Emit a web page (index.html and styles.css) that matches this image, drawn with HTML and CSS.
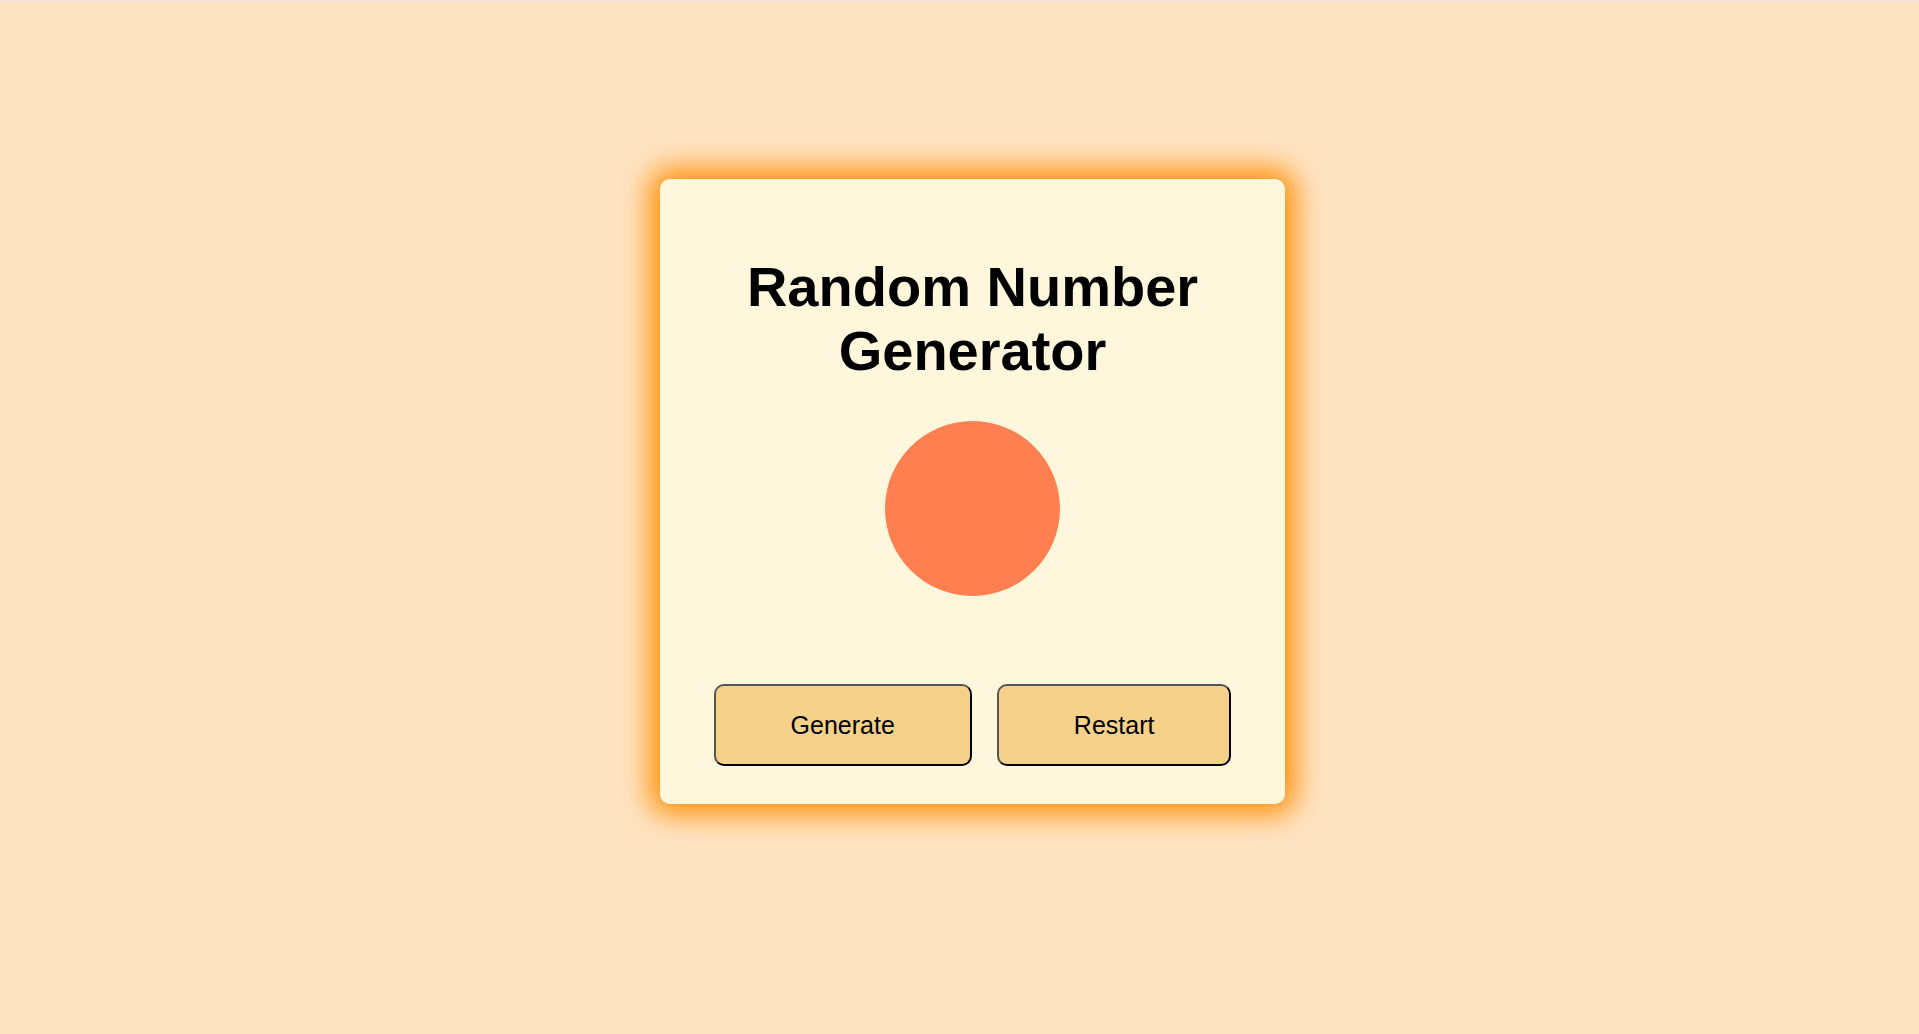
FILE: index.html
```html
<!DOCTYPE html>
<html>
<head>
<meta charset="utf-8">
<title>Random Number Generator</title>
<link rel="stylesheet" href="styles.css">
</head>
<body>
<div class="topline"></div>
<main class="page">
  <section class="card">
    <h1 class="title">Random Number<br>Generator</h1>
    <div class="ball"></div>
    <div class="actions">
      <button class="btn">Generate</button>
      <button class="btn">Restart</button>
    </div>
  </section>
</main>
</body>
</html>
```
FILE: styles.css
```css
html, body {
  margin: 0;
  padding: 0;
}
body {
  background: #ffe4c4;
  font-family: "Liberation Sans", Arial, sans-serif;
  min-height: 1034px;
}
.topline {
  height: 2px;
  background: #f9e1df;
}
.page {
  display: flex;
  justify-content: center;
  padding-top: 177px;
  padding-left: 26px;
}
.card {
  width: 625px;
  height: 625px;
  box-sizing: border-box;
  background: #fff7dc;
  border-radius: 10px;
  box-shadow: 0 0 30px 10px #ff8c00;
  padding-top: 76px;
  display: flex;
  flex-direction: column;
  align-items: center;
}
.title {
  margin: 0;
  font-size: 56px;
  font-weight: bold;
  line-height: 64.4px;
  text-align: center;
  color: #000;
}
.ball {
  width: 175px;
  height: 175px;
  border-radius: 50%;
  background: #ff7f50;
  margin-top: 37px;
}
.actions {
  margin-top: 88px;
  display: flex;
  gap: 25px;
  justify-content: center;
}
.btn {
  font-family: "Liberation Sans", Arial, sans-serif;
  font-size: 25px;
  line-height: 28px;
  padding: 25px 75px;
  background: #f6d18a;
  color: #000;
  border: 2px solid;
  border-color: #555 #000 #000 #555;
  border-radius: 10px;
}
```
